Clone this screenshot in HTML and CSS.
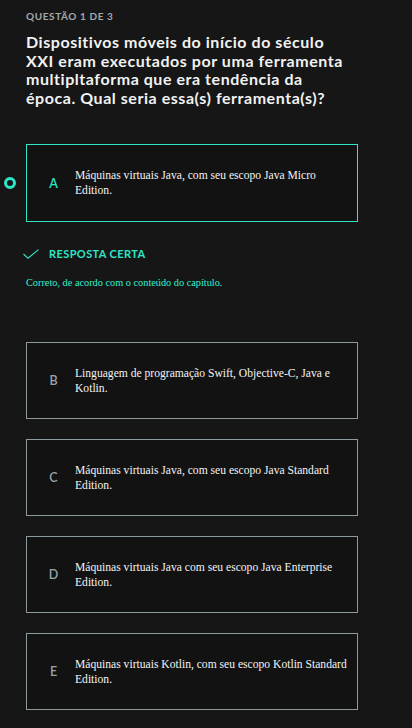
FILE: index.html
```html
<!DOCTYPE html>
<html lang="pt-BR">
<head>
<meta charset="utf-8">
<title>Questão 1 de 3</title>
<link rel="stylesheet" href="styles.css">
</head>
<body>
<main class="page">
  <p class="counter">QUESTÃO 1 DE 3</p>
  <h1 class="question">Dispositivos móveis do início do século XXI eram executados por uma ferramenta multipltaforma que era tendência da época. Qual seria essa(s) ferramenta(s)?</h1>

  <div class="option-wrap">
    <span class="marker"></span>
    <div class="option selected">
      <span class="letter">A</span>
      <span class="text">Máquinas virtuais Java, com seu escopo Java Micro Edition.</span>
    </div>
  </div>

  <div class="feedback">
    <div class="verdict">
      <svg class="check" width="16" height="10" viewBox="0 0 16 10"><path d="M0.5 5 L5 9.2 L15.5 0.6" fill="none" stroke="#2ee6c6" stroke-width="1.1"/></svg>
      <span>RESPOSTA CERTA</span>
    </div>
    <p class="explanation">Correto, de acordo com o conteúdo do capítulo.</p>
  </div>

  <div class="option">
    <span class="letter">B</span>
    <span class="text">Linguagem de programação Swift, Objective-C, Java e Kotlin.</span>
  </div>
  <div class="option">
    <span class="letter">C</span>
    <span class="text">Máquinas virtuais Java, com seu escopo Java Standard Edition.</span>
  </div>
  <div class="option">
    <span class="letter">D</span>
    <span class="text">Máquinas virtuais Java com seu escopo Java Enterprise Edition.</span>
  </div>
  <div class="option">
    <span class="letter">E</span>
    <span class="text">Máquinas virtuais Kotlin, com seu escopo Kotlin Standard Edition.</span>
  </div>
</main>
</body>
</html>
```
FILE: styles.css
```css
html, body {
  margin: 0;
  padding: 0;
  background: #161616;
}
.page {
  padding: 10px 0 0 26px;
  width: 332px;
  font-family: "Lato", "Liberation Sans", sans-serif;
}
.counter {
  margin: 0;
  font-size: 10px;
  line-height: 12px;
  font-weight: 700;
  color: #a3a9ad;
  letter-spacing: 0.6px;
}
.question {
  margin: 11px 0 0 0;
  padding-right: 8px;
  font-size: 16px;
  line-height: 18.5px;
  font-weight: 700;
  color: #f2f2f2;
  letter-spacing: 0.55px;
}
.option-wrap {
  position: relative;
  margin-top: 37px;
}
.marker {
  position: absolute;
  left: -22px;
  top: 33px;
  width: 6px;
  height: 6px;
  border: 3.5px solid #2ee6c6;
  border-radius: 50%;
}
.option {
  box-sizing: border-box;
  height: 77px;
  border: 1px solid #8d989f;
  background: #121212;
  display: flex;
  align-items: center;
  margin-bottom: 20px;
}
.option-wrap .option {
  height: 78px;
  margin-bottom: 0;
}
.option.selected {
  border-color: #2ee6c6;
}
.letter {
  width: 48px;
  padding-left: 5px;
  box-sizing: border-box;
  text-align: center;
  font-size: 12.5px;
  font-weight: 600;
  color: #97a2a9;
  flex: none;
}
.selected .letter {
  color: #2ee6c6;
}
.text {
  font-family: "Liberation Serif", serif;
  font-size: 11.6px;
  line-height: 15px;
  color: #f4f4f4;
  padding-right: 10px;
}
.feedback {
  padding-top: 25px;
  height: 95px;
}
.verdict {
  display: flex;
  align-items: center;
  gap: 10px;
  color: #2ee6c6;
  font-size: 11px;
  font-weight: 700;
  letter-spacing: 0.4px;
}
.check {
  margin-left: -3px;
}
.explanation {
  margin: 17px 0 0 0;
  font-family: "Liberation Serif", serif;
  font-size: 10.3px;
  color: #33f0cf;
}
```
